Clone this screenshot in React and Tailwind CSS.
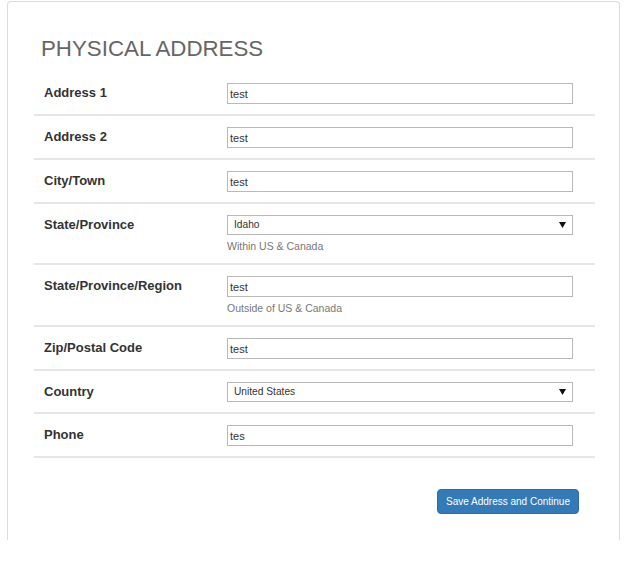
import React from "react";

const rows = [
  { label: "Address 1", value: "test" },
  { label: "Address 2", value: "test" },
  { label: "City/Town", value: "test" },
  { label: "State/Province", value: "Idaho", select: true, help: "Within US & Canada" },
  { label: "State/Province/Region", value: "test", help: "Outside of US & Canada" },
  { label: "Zip/Postal Code", value: "test" },
  { label: "Country", value: "United States", select: true },
  { label: "Phone", value: "tes" },
];

function Field({ row }) {
  if (row.select) {
    return (
      <div className="h-[20px] w-[346px] border border-[#b9b9b9] bg-white flex items-center justify-between pl-[6px] pr-[6px] text-[10.2px] text-[#333]">
        <span>{row.value}</span>
        <svg width="7" height="6" viewBox="0 0 7 6">
          <path d="M0 0 L7 0 L3.5 6 Z" fill="#111" />
        </svg>
      </div>
    );
  }
  return (
    <input
      readOnly
      value={row.value}
      className="block h-[21px] w-[346px] border border-[#b9b9b9] bg-white px-[2px] text-[11px] text-[#333] outline-none"
    />
  );
}

export default function App() {
  return (
    <div className="bg-white min-h-[573px] pt-px font-['Liberation_Sans',Arial,sans-serif]">
      <div className="ml-[7px] w-[613px] h-[539px] border border-b-0 border-[#dcdcdc] rounded-t-[4px] pt-[35px] pl-[26px] pr-[24px]">
        <h1 className="pl-[7px] text-[22.3px] leading-[24px] text-[#666] font-normal mb-[11px]">
          PHYSICAL ADDRESS
        </h1>
        {rows.map((row) => (
          <div
            key={row.label}
            className="flex pt-[11px] pb-[10px] border-b-2 border-[#e6e6e6]"
          >
            <div className="w-[193px] pl-[10px] text-[13px] leading-[19px] font-bold text-[#333]">
              {row.label}
            </div>
            <div>
              <Field row={row} />
              {row.help && (
                <div className="mt-[4px] text-[10.5px] leading-[14px] text-[#777]">
                  {row.help}
                </div>
              )}
            </div>
          </div>
        ))}
        <div className="flex justify-end pr-[16px] mt-[31px]">
          <button className="h-[25px] w-[142px] rounded-[4px] bg-[#337ab7] border border-[#2e6da4] text-white text-[10px]">
            Save Address and Continue
          </button>
        </div>
      </div>
    </div>
  );
}
